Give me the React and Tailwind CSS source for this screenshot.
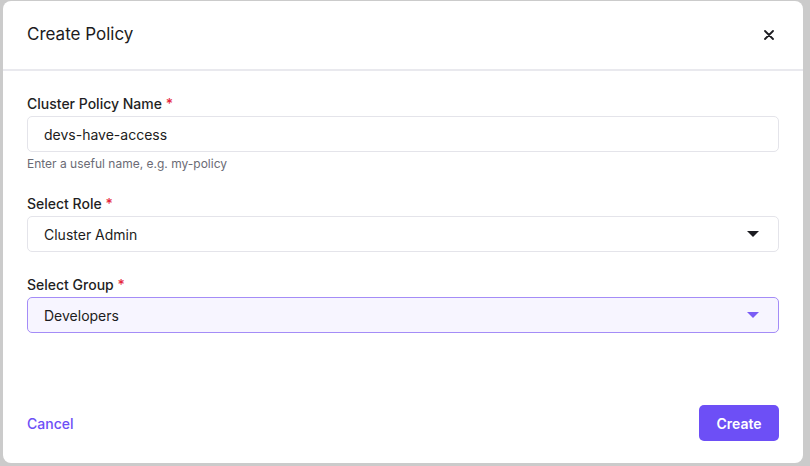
import React from 'react';

const Caret = ({ color }) => (
    <svg width="12" height="6" viewBox="0 0 12 6" className="shrink-0">
        <path d="M0 0 L12 0 L6 6 Z" fill={color} />
    </svg>
);

const Label = ({ children }) => (
    <label className="block text-[14px] leading-5 font-medium text-[#1f1f24] mb-[2px]">
        {children} <span className="text-[#e5283e]">*</span>
    </label>
);

export default function App() {
    return (
        <div
            className="w-[810px] h-[466px] bg-[#cbcbcb] pl-[3px] pt-[1px] overflow-hidden"
            style={{ fontFamily: 'Inter, "Noto Sans", sans-serif' }}
        >
            <div className="w-[800px] h-[462px] bg-white rounded-[8px] flex flex-col">
                {/* header */}
                <div className="h-[70px] shrink-0 flex items-center justify-between pl-6 pr-6 border-b-2 border-[#e9e9ee]">
                    <h2 className="text-[17px] text-[#1c1c21] font-normal">Create Policy</h2>
                    <button className="w-5 h-5 flex items-center justify-center">
                        <svg width="10" height="10" viewBox="0 0 10 10">
                            <path d="M1 1 L9 9 M9 1 L1 9" stroke="#1c1c21" strokeWidth="1.8" strokeLinecap="round" />
                        </svg>
                    </button>
                </div>

                {/* body */}
                <div className="flex-1 px-6 pt-[23px]">
                    <Label>Cluster Policy Name</Label>
                    <div className="h-[36px] border border-[#e4e4ea] rounded-[5px] flex items-center px-4 text-[14px] text-[#1c1c21]">
                        devs-have-access
                    </div>
                    <p className="text-[12px] leading-4 text-[#6b6b75] mt-1">Enter a useful name, e.g. my-policy</p>

                    <div className="mt-[22px]">
                        <Label>Select Role</Label>
                        <div className="h-[36px] border border-[#e4e4ea] rounded-[5px] flex items-center justify-between pl-4 pr-[19px] text-[14px] text-[#1c1c21]">
                            <span>Cluster Admin</span>
                            <Caret color="#1c1c21" />
                        </div>
                    </div>

                    <div className="mt-[23px]">
                        <Label>Select Group</Label>
                        <div className="h-[36px] border border-[#a48cf7] bg-[#f7f5ff] rounded-[5px] flex items-center justify-between pl-4 pr-[19px] text-[14px] text-[#1c1c21]">
                            <span>Developers</span>
                            <Caret color="#7a5cf5" />
                        </div>
                    </div>
                </div>

                {/* footer */}
                <div className="flex items-center justify-between px-6 pb-[22px]">
                    <button className="text-[14px] font-medium text-[#6d4ff6]">Cancel</button>
                    <button className="h-[36px] w-[80px] rounded-[5px] bg-[#6d4ff6] text-white text-[14px] font-semibold">
                        Create
                    </button>
                </div>
            </div>
        </div>
    );
}
